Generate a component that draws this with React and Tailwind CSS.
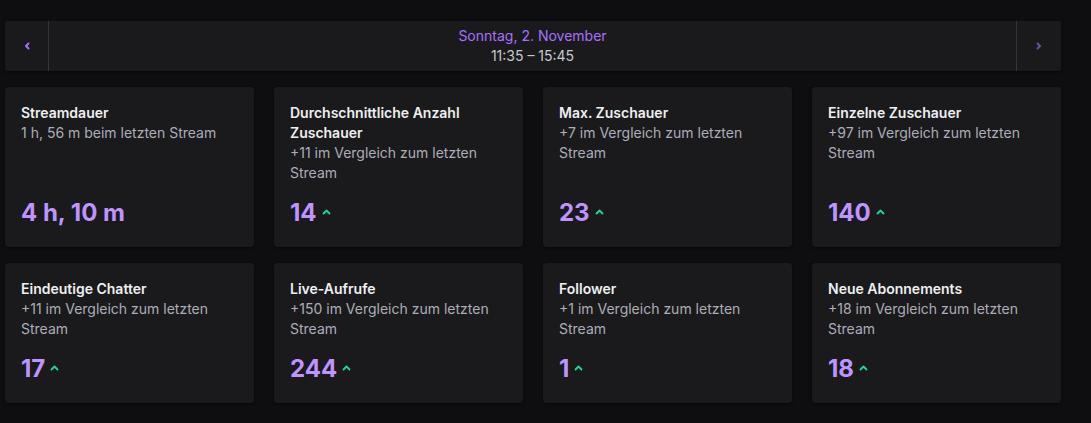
import React from "react"

const stats = [
  { title: "Streamdauer", sub: "1 h, 56 m beim letzten Stream", value: "4 h, 10 m", up: false },
  { title: "Durchschnittliche Anzahl Zuschauer", sub: "+11 im Vergleich zum letzten Stream", value: "14", up: true },
  { title: "Max. Zuschauer", sub: "+7 im Vergleich zum letzten Stream", value: "23", up: true },
  { title: "Einzelne Zuschauer", sub: "+97 im Vergleich zum letzten Stream", value: "140", up: true },
  { title: "Eindeutige Chatter", sub: "+11 im Vergleich zum letzten Stream", value: "17", up: true },
  { title: "Live-Aufrufe", sub: "+150 im Vergleich zum letzten Stream", value: "244", up: true },
  { title: "Follower", sub: "+1 im Vergleich zum letzten Stream", value: "1", up: true },
  { title: "Neue Abonnements", sub: "+18 im Vergleich zum letzten Stream", value: "18", up: true },
]

const Chevron = ({ dir, className }) => (
  <svg width="8" height="8" viewBox="0 0 8 8" className={className}>
    <path
      d={dir === "left" ? "M5.5 1.5 L3 4 L5.5 6.5" : "M2.5 1.5 L5 4 L2.5 6.5"}
      fill="none"
      stroke="currentColor"
      strokeWidth="2"
      strokeLinecap="round"
      strokeLinejoin="round"
    />
  </svg>
)

const UpArrow = () => (
  <svg width="9" height="6" viewBox="0 0 9 6" className="text-[#1fd69e]">
    <path d="M1.5 4.5 L4.5 1.5 L7.5 4.5" fill="none" stroke="currentColor" strokeWidth="1.8" strokeLinecap="round" strokeLinejoin="round" />
  </svg>
)

const StatCard = ({ title, sub, value, up }) => (
  <div className="bg-[#1a1a1d] rounded-[4px] shadow-[0_1px_3px_rgba(0,0,0,0.5)] px-4 pt-4 pb-[18px] flex flex-col">
    <p className="text-sm leading-5 font-semibold text-[#efeff1]">{title}</p>
    <p className="text-sm leading-5 text-[#adadb8]">{sub}</p>
    <div className="mt-auto pt-[14px] flex items-center gap-[5px]">
      <span className="text-2xl leading-8 font-bold text-[#bf94ff]">{value}</span>
      {up && <span className="mb-[3px]"><UpArrow /></span>}
    </div>
  </div>
)

export default function App() {
  return (
    <div className="min-h-[423px] bg-[#0e0e10] font-['Inter',sans-serif] pt-[21px] pl-[5px] overflow-hidden">
      <div className="w-[1056px] h-[50px] bg-[#1a1a1d] rounded-[2px] flex shadow-[0_1px_3px_rgba(0,0,0,0.5)]">
        <button className="w-[44px] h-full flex items-center justify-center border-r border-[#35353b] text-[#a970ff]">
          <Chevron dir="left" />
        </button>
        <div className="flex-1 flex flex-col items-center justify-center">
          <span className="text-sm leading-5 text-[#a970ff]">Sonntag, 2. November</span>
          <span className="text-sm leading-5 text-[#c8c8cf]">11:35 – 15:45</span>
        </div>
        <button className="w-[45px] h-full flex items-center justify-center border-l border-[#35353b] text-[#6e4fa3]">
          <Chevron dir="right" />
        </button>
      </div>
      <div className="w-[1056px] mt-4 grid grid-cols-4 gap-x-5 gap-y-4">
        {stats.map((s) => (
          <StatCard key={s.title} {...s} />
        ))}
      </div>
    </div>
  )
}
